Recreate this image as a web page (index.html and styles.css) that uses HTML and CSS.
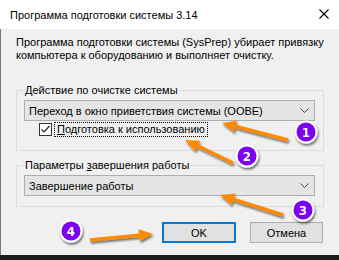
FILE: index.html
```html
<!DOCTYPE html>
<html>
<head>
<meta charset="utf-8">
<title>SysPrep</title>
<link rel="stylesheet" href="styles.css">
</head>
<body>
<div class="window">
    <div class="titlebar">
        <span>Программа подготовки системы 3.14</span>
        <svg class="close" width="10" height="10" viewBox="0 0 10 10">
            <path d="M0.5 0.5 L9.5 9.5 M9.5 0.5 L0.5 9.5" stroke="#000" stroke-width="1.1" fill="none"/>
        </svg>
    </div>

    <div class="dialog">
        <p class="desc">Программа подготовки системы (SysPrep) убирает привязку компьютера к оборудованию и выполняет очистку.</p>

        <fieldset class="group group-first">
            <legend>Действие по очистке системы</legend>
            <div class="combo">
                <span>Переход в окно приветствия системы (OOBE)</span>
                <svg width="9" height="5" viewBox="0 0 9 5"><path d="M0.5 0.5 L4.5 4.5 L8.5 0.5" stroke="#444" fill="none"/></svg>
            </div>
            <div class="check-row">
                <svg class="checkbox" width="13" height="13" viewBox="0 0 13 13">
                    <rect x="0.5" y="0.5" width="12" height="12" fill="#fff" stroke="#333"/>
                    <path d="M2.5 6.5 L5 9 L10.5 3" stroke="#222" stroke-width="1.2" fill="none"/>
                </svg>
                <span class="check-label"><u>П</u>одготовка к использованию</span>
            </div>
        </fieldset>

        <fieldset class="group group-second">
            <legend>Параметры <u>з</u>авершения работы</legend>
            <div class="combo">
                <span>Завершение работы</span>
                <svg width="9" height="5" viewBox="0 0 9 5"><path d="M0.5 0.5 L4.5 4.5 L8.5 0.5" stroke="#444" fill="none"/></svg>
            </div>
        </fieldset>

        <div class="buttons">
            <button class="btn btn-default">OK</button>
            <button class="btn btn-cancel">Отмена</button>
        </div>
    </div>

    <!-- пометки поверх окна -->
    <svg class="marks" width="339" height="255" viewBox="0 0 339 255">
        <defs>
            <filter id="shadow" x="-20%" y="-20%" width="140%" height="160%">
                <feDropShadow dx="1" dy="2" stdDeviation="1.3" flood-color="#000" flood-opacity="0.55"/>
            </filter>
        </defs>
        <g filter="url(#shadow)" fill="#ff8a00" stroke="#ff8a00">
            <line x1="288" y1="140" x2="236" y2="126.5" stroke-width="3.5"/>
            <polygon points="222,123 237.1,120.7 234.1,132.3" stroke="none"/>
            <line x1="233" y1="163" x2="198" y2="146" stroke-width="3.5"/>
            <polygon points="185,140 200.2,140.7 195,151.5" stroke="none"/>
            <line x1="283" y1="215" x2="233" y2="199.2" stroke-width="3.5"/>
            <polygon points="220,195 235.1,193.5 231.5,204.9" stroke="none"/>
            <line x1="90" y1="240" x2="139" y2="235.3" stroke-width="3.5"/>
            <polygon points="153,234 139.7,241.3 138.5,229.3" stroke="none"/>
        </g>
        <g class="badge" filter="url(#shadow)">
            <circle cx="306" cy="132" r="11.5" fill="#fff"/>
            <circle cx="306" cy="132" r="9.5" fill="#7b00f2"/>
            <text x="306" y="136.5">1</text>
        </g>
        <g class="badge" filter="url(#shadow)">
            <circle cx="247" cy="156" r="11.5" fill="#fff"/>
            <circle cx="247" cy="156" r="9.5" fill="#7b00f2"/>
            <text x="247" y="160.5">2</text>
        </g>
        <g class="badge" filter="url(#shadow)">
            <circle cx="303" cy="210" r="11.5" fill="#fff"/>
            <circle cx="303" cy="210" r="9.5" fill="#7b00f2"/>
            <text x="303" y="214.5">3</text>
        </g>
        <g class="badge" filter="url(#shadow)">
            <circle cx="71" cy="231" r="11.5" fill="#fff"/>
            <circle cx="71" cy="231" r="9.5" fill="#7b00f2"/>
            <text x="71" y="235.5">4</text>
        </g>
    </svg>
</div>
</body>
</html>
```

FILE: styles.css
```css
body {
    margin: 0;
    background-color: #1c1c1c;
    font-family: "Liberation Sans", Arial, sans-serif;
    font-size: 11px;
    color: #000;
}
.window {
    position: relative;
    width: 339px;
    height: 255px;
    background-color: #f0f0f0;
}
.titlebar {
    height: 29px;
    background-color: #fff;
    display: flex;
    align-items: center;
    justify-content: space-between;
    padding: 0 10px;
}
.close {
    margin-top: -2px;
}
.dialog {
    box-sizing: border-box;
    height: 226px;
    border-left: 1px solid #7a7a7a;
    padding: 7px 15px 0 15px;
}
.desc {
    margin: 0;
    line-height: 13px;
}
.group {
    margin: 0;
    border: 1px solid #dcdcdc;
    padding: 0 8px 0 7px;
}
.group legend {
    padding: 0 1px;
    line-height: 13px;
}
.group-first {
    margin-top: 22px;
    padding-bottom: 13px;
}
.group-second {
    margin-top: 8px;
    padding-bottom: 10px;
}
.combo {
    box-sizing: border-box;
    height: 21px;
    margin-top: 3px;
    background-color: #e5e5e5;
    border: 1px solid #adadad;
    display: flex;
    align-items: center;
    justify-content: space-between;
    padding: 0 5px 0 4px;
}
.check-row {
    display: flex;
    align-items: center;
    margin: 1px 0 0 15px;
    height: 15px;
}
.checkbox {
    margin-right: 2px;
}
.check-label {
    border: 1px dotted #000;
    padding: 0 2px;
    line-height: 13px;
}
.buttons {
    display: flex;
    justify-content: flex-end;
    gap: 14px;
    margin: 15px 1px 0 0;
}
.btn {
    box-sizing: border-box;
    height: 21px;
    font-family: inherit;
    font-size: 11px;
    background-color: #e1e1e1;
    border: 1px solid #adadad;
    padding: 0;
}
.btn-default {
    width: 74px;
    border: 2px solid #0078d7;
}
.btn-cancel {
    width: 73px;
}
.marks {
    position: absolute;
    left: 0;
    top: 0;
}
.badge text {
    font-family: "DejaVu Sans", sans-serif;
    font-weight: bold;
    font-size: 12px;
    fill: #fff;
    text-anchor: middle;
}
```
